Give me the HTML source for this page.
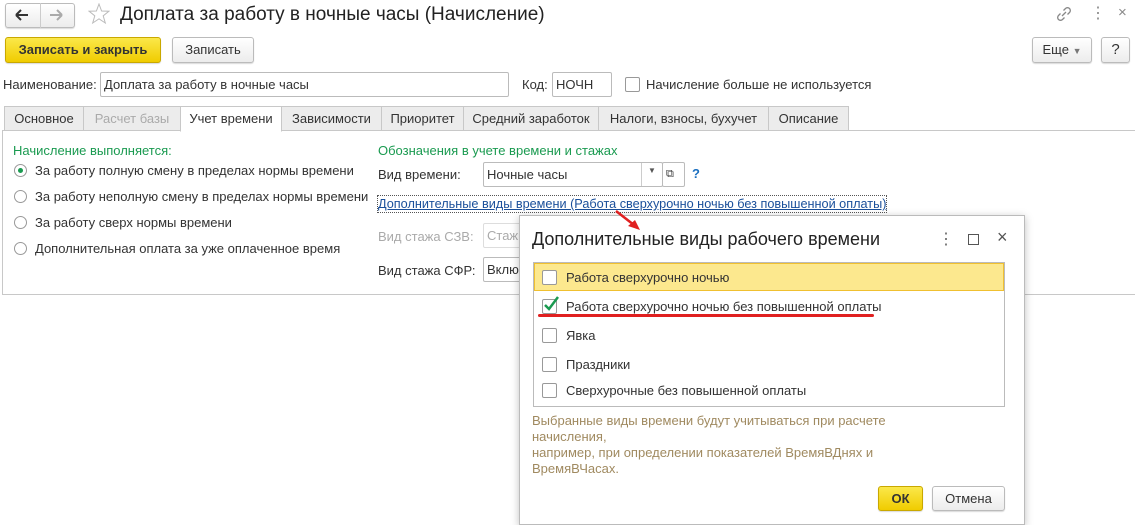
<!DOCTYPE html>
<html><head><meta charset="utf-8"><style>
body{margin:0;width:1135px;height:520px;overflow:hidden;background:#fff;font-family:"Liberation Sans","Noto Sans CJK SC",sans-serif;font-size:13px;color:#333;position:relative}
.a{position:absolute;white-space:nowrap}
.btn{position:absolute;border:1px solid #bbb;border-radius:3px;background:linear-gradient(#fff,#ececec);box-shadow:0 1px 1px rgba(0,0,0,.15);text-align:center;box-sizing:border-box;color:#333}
.yb{background:linear-gradient(#fbe84a,#f0cc00);border-color:#c9a800;font-weight:bold;color:#333}
.inp{position:absolute;border:1px solid #bbb;border-radius:2px;background:#fff;box-sizing:border-box;padding-left:3px}
.tab{position:absolute;top:106px;height:25px;border:1px solid #c8c8c8;background:#ececec;box-sizing:border-box;line-height:24px;text-align:center}
.rad{position:absolute;width:13px;height:13px;border:1px solid #999;border-radius:50%;box-sizing:border-box;background:#fff}
.cb{position:absolute;width:15px;height:15px;border:1px solid #999;border-radius:2px;box-sizing:border-box;background:#fff}
</style></head><body>
<div class="btn" style="left:5px;top:3px;width:70px;height:25px"></div>
<div class="a" style="left:40px;top:3px;width:1px;height:25px;background:#ccc"></div>
<svg class="a" style="left:14px;top:8px" width="60" height="14">
<path d="M2 7H14M2 7L7 2M2 7L7 12" stroke="#333" stroke-width="2" fill="none"/>
<path d="M36 7H48M48 7L43 2M48 7L43 12" stroke="#aaa" stroke-width="2" fill="none"/></svg>
<svg class="a" style="left:88px;top:3px" width="22" height="22"><polygon points="11,1 13.6,8 21,8.2 15.2,12.8 17.3,20 11,15.8 4.7,20 6.8,12.8 1,8.2 8.4,8" fill="none" stroke="#bbb" stroke-width="1"/></svg>
<div class="a" style="left:120px;top:4px;font-size:19px;color:#222">Доплата за работу в ночные часы (Начисление)</div>
<svg class="a" style="left:1056px;top:6px" width="16" height="16"><path d="M6 10L10 6M7.5 4.5L9.5 2.5A2.5 2.5 0 0 1 13.5 6.5L11.5 8.5M8.5 11.5L6.5 13.5A2.5 2.5 0 0 1 2.5 9.5L4.5 7.5" stroke="#888" stroke-width="1.3" fill="none"/></svg>
<div class="a" style="left:1090px;top:3px;font-size:16px;color:#888">⋮</div>
<div class="a" style="left:1118px;top:4px;font-size:15px;color:#888">×</div>

<div class="btn yb" style="left:5px;top:37px;width:156px;height:26px;line-height:24px">Записать и закрыть</div>
<div class="btn" style="left:172px;top:37px;width:82px;height:26px;line-height:24px">Записать</div>
<div class="btn" style="left:1032px;top:37px;width:60px;height:26px;line-height:24px">Еще <span style="font-size:9px;color:#777">▼</span></div>
<div class="btn" style="left:1101px;top:37px;width:29px;height:26px;line-height:24px;font-size:15px">?</div>

<div class="a" style="left:3px;top:77px">Наименование:</div>
<div class="inp" style="left:100px;top:72px;width:409px;height:25px;line-height:23px">Доплата за работу в ночные часы</div>
<div class="a" style="left:522px;top:77px">Код:</div>
<div class="inp" style="left:552px;top:72px;width:60px;height:25px;line-height:23px">НОЧН</div>
<div class="cb" style="left:625px;top:77px"></div>
<div class="a" style="left:646px;top:77px">Начисление больше не используется</div>

<div class="a" style="left:2px;top:130px;width:1140px;height:165px;border:1px solid #c8c8c8;box-sizing:border-box"></div>
<div class="tab" style="left:4px;width:80px">Основное</div>
<div class="tab" style="left:83px;width:98px;color:#aaa">Расчет базы</div>
<div class="tab" style="left:180px;width:102px;background:#fff;border-bottom-color:#fff;height:26px">Учет времени</div>
<div class="tab" style="left:281px;width:101px">Зависимости</div>
<div class="tab" style="left:381px;width:83px">Приоритет</div>
<div class="tab" style="left:463px;width:136px">Средний заработок</div>
<div class="tab" style="left:598px;width:171px">Налоги, взносы, бухучет</div>
<div class="tab" style="left:768px;width:81px">Описание</div>

<div class="a" style="left:13px;top:143px;color:#1a9a50">Начисление выполняется:</div>
<div class="rad" style="left:14px;top:164px"></div><div class="a" style="left:18px;top:168px;width:5px;height:5px;border-radius:50%;background:#1a9a50"></div>
<div class="a" style="left:35px;top:163px">За работу полную смену в пределах нормы времени</div>
<div class="rad" style="left:14px;top:190px"></div><div class="a" style="left:35px;top:189px">За работу неполную смену в пределах нормы времени</div>
<div class="rad" style="left:14px;top:216px"></div><div class="a" style="left:35px;top:215px">За работу сверх нормы времени</div>
<div class="rad" style="left:14px;top:242px"></div><div class="a" style="left:35px;top:241px">Дополнительная оплата за уже оплаченное время</div>

<div class="a" style="left:378px;top:143px;color:#1a9a50">Обозначения в учете времени и стажах</div>
<div class="a" style="left:378px;top:167px">Вид времени:</div>
<div class="inp" style="left:483px;top:162px;width:180px;height:25px;line-height:23px">Ночные часы</div>
<div class="a" style="left:641px;top:163px;width:1px;height:23px;background:#ccc"></div>
<div class="a" style="left:648px;top:166px;font-size:8px;color:#555">▼</div>
<div class="inp" style="left:662px;top:162px;width:23px;height:25px;font-size:11px;line-height:23px">⧉</div>
<div class="a" style="left:692px;top:166px;color:#1a6fc0;font-weight:bold">?</div>
<div class="a" style="left:378px;top:196px;color:#1a4f9a;text-decoration:underline;outline:1px dotted #555;padding:1px 0;font-size:12.7px">Дополнительные виды времени (Работа сверхурочно ночью без повышенной оплаты)</div>
<div class="a" style="left:378px;top:229px;color:#aaa">Вид стажа СЗВ:</div>
<div class="inp" style="left:483px;top:223px;width:60px;height:25px;line-height:23px;color:#aaa;border-color:#ddd">Стаж</div>
<div class="a" style="left:378px;top:263px">Вид стажа СФР:</div>
<div class="inp" style="left:483px;top:257px;width:60px;height:25px;line-height:23px">Вклю</div>

<div class="a" style="left:519px;top:215px;width:506px;height:310px;background:#fff;border:1px solid #bbb;box-shadow:0 2px 8px rgba(0,0,0,.25);box-sizing:border-box"></div>
<svg class="a" style="left:600px;top:205px" width="50" height="30"><line x1="16" y1="6" x2="34" y2="20" stroke="#e02020" stroke-width="2.5"/><polygon points="40,25 28,21 35,15" fill="#e02020"/></svg>
<div class="a" style="left:532px;top:229px;font-size:18px;color:#222">Дополнительные виды рабочего времени</div>
<div class="a" style="left:938px;top:229px;font-size:16px;color:#666">⋮</div>
<div class="a" style="left:968px;top:234px;width:9px;height:9px;border:1.5px solid #555"></div>
<div class="a" style="left:997px;top:227px;font-size:18px;color:#555">×</div>
<div class="a" style="left:533px;top:262px;width:472px;height:145px;border:1px solid #bbb;box-sizing:border-box"></div>
<div class="a" style="left:534px;top:263px;width:470px;height:28px;background:#fce88e;border:1px solid #f0c030;box-sizing:border-box"></div>
<div class="cb" style="left:542px;top:270px"></div><div class="a" style="left:566px;top:270px">Работа сверхурочно ночью</div>
<div class="cb" style="left:542px;top:299px"></div>
<svg class="a" style="left:542px;top:295px" width="18" height="18"><path d="M3 10L7 14L16 2" stroke="#1a9a50" stroke-width="2.5" fill="none"/></svg>
<div class="a" style="left:566px;top:299px">Работа сверхурочно ночью без повышенной оплаты</div>
<div class="a" style="left:538px;top:314px;width:336px;height:3px;background:#e02020;border-radius:2px"></div>
<div class="cb" style="left:542px;top:328px"></div><div class="a" style="left:566px;top:328px">Явка</div>
<div class="cb" style="left:542px;top:357px"></div><div class="a" style="left:566px;top:357px">Праздники</div>
<div class="cb" style="left:542px;top:383px"></div><div class="a" style="left:566px;top:383px">Сверхурочные без повышенной оплаты</div>
<div class="a" style="left:532px;top:413px;color:#a08a60;line-height:16px">Выбранные виды времени будут учитываться при расчете<br>начисления,<br>например, при определении показателей ВремяВДнях и<br>ВремяВЧасах.</div>
<div class="btn yb" style="left:878px;top:486px;width:45px;height:25px;line-height:23px">ОК</div>
<div class="btn" style="left:932px;top:486px;width:73px;height:25px;line-height:23px">Отмена</div>
</body></html>
